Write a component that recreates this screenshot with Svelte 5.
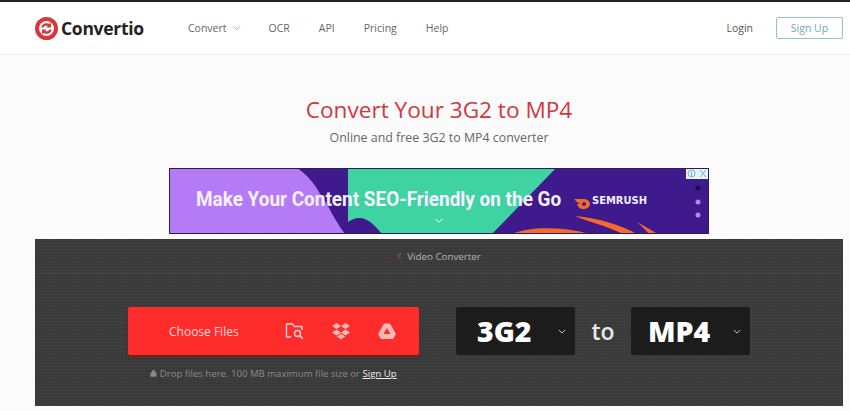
<script>
	const links = ['OCR', 'API', 'Pricing', 'Help'];
</script>

<header class="top">
	<a class="brand" href="#home">
		<svg class="logo" viewBox="0 0 24 24" width="23" height="23">
			<circle cx="12" cy="12" r="12" fill="#d9363a" />
			<circle cx="12" cy="12" r="7.800" fill="#fff" />
			<path d="M6.500 11a5.500 5.500 0 0 1 8.500-3.600l1.700-1.400v5h-5l1.700-1.500a3.300 3.300 0 0 0-4.700 1.500z" fill="#d9363a" />
			<path d="M17.500 13a5.500 5.500 0 0 1-8.500 3.600l-1.700 1.400v-5h5l-1.700 1.500a3.300 3.300 0 0 0 4.700-1.500z" fill="#d9363a" />
		</svg>
		<span class="word">Convertio</span>
	</a>
	<nav class="nav">
		<span class="convert">Convert
			<svg viewBox="0 0 10 6" width="9" height="6"><path d="M1 1l4 4 4-4" fill="none" stroke="#b79aa0" stroke-width="1" /></svg>
		</span>
		{#each links as link}
			<span>{link}</span>
		{/each}
	</nav>
	<div class="account">
		<span>Login</span>
		<span class="signup">Sign Up</span>
	</div>
</header>

<main class="page">
	<h1>Convert Your 3G2 to MP4</h1>
	<p class="sub">Online and free 3G2 to MP4 converter</p>

	<div class="ad">
		<svg viewBox="0 0 540 66" width="540" height="66">
			<rect width="540" height="66" fill="#3f1a8c" />
			<path d="M0 0H128C146 12 150 26 158 36C164 48 170 58 176 66H0z" fill="#b57bf7" />
			<path d="M179 0H387L323 66H213C206 58 200 50 190 50C186 50 182 52 179 54z" fill="#3fd3a2" />
			<path d="M343 66C360 59 390 58 421 66z" fill="#f4692c" />
			<path d="M406 48C430 50 452 57 468 66H454C438 58 420 54 406 48z" fill="#f4692c" />
			<path d="M468 54L489 66H480C476 61 472 58 468 54z" fill="#f4692c" />
			<text class="ad-text" transform="translate(27 38) scale(.9026 1)">Make Your Content SEO-Friendly on the Go</text>
			<path d="M266 51l4 3 4-3" fill="none" stroke="#e8fff6" stroke-width="1" />
			<path d="M405 31h9c4 0 7 2 7 5s-3 5-7 5c-3 0-5-2-6-5h3c-2-1-4-3-6-5z" fill="#f4692c" />
			<circle cx="415" cy="36" r="2" fill="#3f1a8c" />
			<text class="ad-brand" x="423" y="36" textLength="55" lengthAdjust="spacingAndGlyphs">SEMRUSH</text>
			<circle cx="529" cy="20" r="2.500" fill="#1c0f45" />
			<circle cx="529" cy="34" r="2.500" fill="#a98cf0" />
			<circle cx="529" cy="47" r="2.500" fill="#a98cf0" />
			<rect x="517" y="0" width="23" height="11" fill="#e8f3f6" />
			<circle cx="522.500" cy="5.500" r="3.500" fill="none" stroke="#5fb4d8" stroke-width="1" />
			<path d="M522.500 4v4" stroke="#5fb4d8" stroke-width="1" />
			<path d="M531 2l6 7M537 2l-6 7" stroke="#5fb4d8" stroke-width="1" />
			<rect x=".5" y=".5" width="539" height="65" fill="none" stroke="#2a1a55" stroke-width="1" />
		</svg>
	</div>

	<section class="panel">
		<div class="crumb">
			<svg viewBox="0 0 6 10" width="5" height="8"><path d="M5 1L1 5l4 4" fill="none" stroke="#a5424a" stroke-width="1.400" /></svg>
			<span>Video Converter</span>
		</div>
		<div class="controls">
			<div class="left">
				<div class="choose">
					<span class="choose-label">Choose Files</span>
					<span class="icons">
						<svg viewBox="0 0 20 18" width="20" height="18">
							<path d="M6 15H1.500V2h6l2 2.500H17V8" fill="none" stroke="#ffd0d0" stroke-width="1.400" />
							<circle cx="12.500" cy="11.500" r="3" fill="none" stroke="#ffd0d0" stroke-width="1.400" />
							<path d="M14.800 13.800l3 3" stroke="#ffd0d0" stroke-width="1.600" />
						</svg>
						<svg viewBox="0 0 20 18" width="20" height="18">
							<path d="M5.500 1L1 4l4.500 3L10 4zM14.500 1L10 4l4.500 3L19 4zM5.500 7.500L1 10.500l4.500 3 4.500-3zM14.500 7.500L10 10.500l4.500 3 4.500-3zM5.800 14.500L10 17.200l4.200-2.700L10 11.700z" fill="#ffb9b9" />
						</svg>
						<svg viewBox="0 0 20 18" width="20" height="18">
							<path d="M7 1.500h6l6 10.500-3 5H4l-3-5zM10 6l-3.500 6h7z" fill="#ffb9b9" fill-rule="evenodd" />
						</svg>
					</span>
				</div>
				<p class="drop">
					<svg viewBox="0 0 10 10" width="7" height="8"><path d="M1 4.500h8V10H1zM3 4.500V3a2 2 0 0 1 4 0v1.500" fill="#8a8a8a" stroke="#8a8a8a" stroke-width=".6" /></svg>
					Drop files here. 100 MB maximum file size or <u>Sign Up</u>
				</p>
			</div>
			<div class="format">
				<b>3G2</b>
				<svg viewBox="0 0 10 6" width="8" height="5"><path d="M1 1l4 4 4-4" fill="none" stroke="#ccc" stroke-width="1.200" /></svg>
			</div>
			<span class="to">to</span>
			<div class="format">
				<b>MP4</b>
				<svg viewBox="0 0 10 6" width="8" height="5"><path d="M1 1l4 4 4-4" fill="none" stroke="#ccc" stroke-width="1.200" /></svg>
			</div>
		</div>
	</section>
</main>

<style>
	:global(body) {
		background: #fbfbfb;
		font-family: "Open Sans", sans-serif;
		color: #555;
	}
	.top {
		display: flex;
		align-items: center;
		box-sizing: border-box;
		height: 55px;
		padding: 0 7px 0 35px;
		border-top: 2px solid #222;
		border-bottom: 1px solid #eee;
		background: #fff;
		font-size: 10.500px;
	}
	.brand {
		display: flex;
		align-items: center;
		gap: 3px;
		width: 153px;
		text-decoration: none;
	}
	.word {
		font-size: 17.500px;
		font-weight: 700;
		color: #222;
		letter-spacing: -0.3px;
	}
	.nav {
		display: flex;
		gap: 29px;
		color: #666;
	}
	.convert {
		display: flex;
		align-items: center;
		gap: 5px;
	}
	.convert svg {
		margin-right: -1px;
	}
	.account {
		display: flex;
		align-items: center;
		gap: 23px;
		margin-left: auto;
	}
	.signup {
		box-sizing: border-box;
		width: 67px;
		padding: 3px 0;
		border: 1px solid #8fc4c4;
		border-radius: 2px;
		color: #78a9b5;
		text-align: center;
	}
	.page {
		display: flex;
		flex-direction: column;
		align-items: center;
		padding-left: 28px;
	}
	h1 {
		margin: 39px 0 0;
		font-size: 22.600px;
		font-weight: 400;
		line-height: 32px;
		color: #d0383c;
	}
	.sub {
		margin: 2px 0 0;
		font-size: 12.400px;
		line-height: 20px;
		color: #666;
	}
	.ad {
		margin-top: 20px;
		width: 540px;
		height: 66px;
	}
	.ad svg {
		display: block;
	}
	.ad-text {
		font-family: Roboto, sans-serif;
		font-size: 21px;
		font-weight: 700;
		fill: #f6f0ff;
	}
	.ad-brand {
		font-family: "DejaVu Sans", sans-serif;
		font-size: 10px;
		font-weight: 700;
		fill: #f2eeff;
	}
	.panel {
		box-sizing: border-box;
		align-self: flex-start;
		width: 808px;
		height: 167px;
		margin: 5px 0 0 7px;
		background-color: #3b3b3b;
		background-image: repeating-linear-gradient(0deg, rgba(255, 255, 255, .025) 0 1px, transparent 1px 3px), repeating-linear-gradient(90deg, rgba(0, 0, 0, .05) 0 1px, transparent 1px 3px);
	}
	.crumb {
		display: flex;
		align-items: center;
		justify-content: center;
		gap: 5px;
		height: 34px;
		border-bottom: 1px solid #4a4a4a;
		font-size: 9.800px;
		color: #b5b5b5;
	}
	.controls {
		display: flex;
		align-items: flex-start;
		padding: 33px 0 0 93px;
	}
	.left {
		width: 291px;
		margin-right: 37px;
	}
	.choose {
		display: flex;
		align-items: center;
		box-sizing: border-box;
		height: 48px;
		padding-left: 41px;
		border-radius: 2px;
		background: #ff2c2c;
		box-shadow: 0 2px 2px #7a1f1f;
		color: #ffd9d9;
		font-size: 12px;
	}
	.choose-label {
		width: 116px;
	}
	.icons {
		display: flex;
		gap: 26px;
	}
	.drop {
		margin: 12px 0 0;
		font-size: 9.600px;
		color: #8a8a8a;
		text-align: center;
	}
	.drop u {
		color: #eee;
	}
	.format {
		display: flex;
		align-items: center;
		justify-content: space-between;
		box-sizing: border-box;
		width: 119px;
		height: 48px;
		padding: 0 9px 0 21px;
		border-radius: 2px;
		background: #1c1c1c;
		color: #fff;
	}
	.format:last-child {
		padding-left: 17px;
	}
	.format b {
		font-size: 28.500px;
		font-weight: 800;
	}
	.to {
		width: 56px;
		font-size: 23px;
		font-weight: 600;
		line-height: 48px;
		color: #e8e8e8;
		text-align: center;
	}
</style>
